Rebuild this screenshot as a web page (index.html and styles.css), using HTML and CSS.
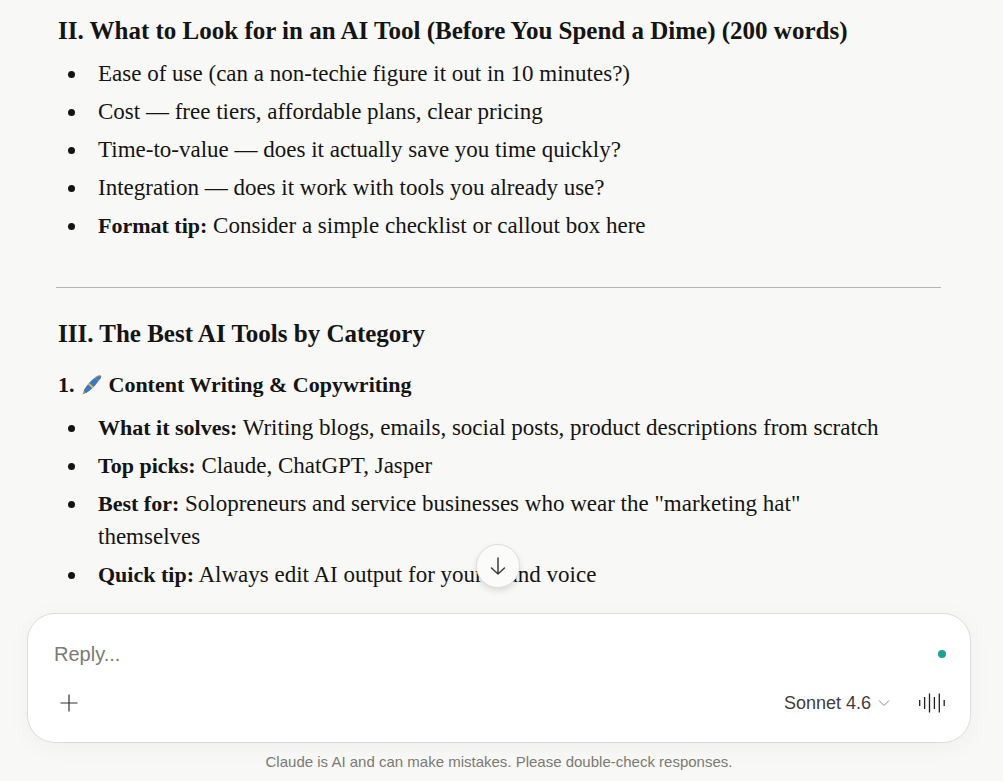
FILE: index.html
```html
<!DOCTYPE html>
<html lang="en">
<head>
  <meta charset="UTF-8" />
  <meta name="viewport" content="width=device-width, initial-scale=1" />
  <title>Claude</title>
  <link rel="stylesheet" href="styles.css">
</head>
<body>

  <main class="message">
    <h2>II. What to Look for in an AI Tool (Before You Spend a Dime) (200 words)</h2>
    <ul>
      <li>Ease of use (can a non-techie figure it out in 10 minutes?)</li>
      <li>Cost — free tiers, affordable plans, clear pricing</li>
      <li>Time-to-value — does it actually save you time quickly?</li>
      <li>Integration — does it work with tools you already use?</li>
      <li><strong>Format tip:</strong> Consider a simple checklist or callout box here</li>
    </ul>

    <hr>

    <h2>III. The Best AI Tools by Category</h2>
    <h3>
      <span>1.</span>
      <svg class="pen" width="20" height="20" viewBox="0 0 20 20" aria-hidden="true">
        <path d="M.5 19.500 2 15.200 4.600 17.800z" fill="#b08c4c" />
        <path d="M1.800 15.500C3.500 11.500 7.500 7 13 2.500L16.500 6C13 11 8.500 15.500 4.300 17.900z" fill="#3c78bd" />
        <path d="M13 2.500C15.500 .8 18 0 19 .8C19.800 1.800 18.500 4 16.500 6z" fill="#4579ae" />
        <path d="M7 7.700 11.800 12 10.300 13.300 5.600 9.100z" fill="#dfb765" />
        <path d="M13 2.500C15.500 .8 18 0 19 .8" fill="none" stroke="#d0a95c" />
      </svg>
      <span>Content Writing &amp; Copywriting</span>
    </h3>
    <ul>
      <li><strong>What it solves:</strong> Writing blogs, emails, social posts, product descriptions from scratch</li>
      <li><strong>Top picks:</strong> Claude, ChatGPT, Jasper</li>
      <li><strong>Best for:</strong> Solopreneurs and service businesses who wear the "marketing hat" themselves</li>
      <li><strong>Quick tip:</strong> Always edit AI output for your brand voice</li>
    </ul>
  </main>

  <footer class="dock">
    <button class="scroll-down" type="button" aria-label="Scroll to bottom">
      <svg width="20" height="20" viewBox="0 0 20 20" fill="none" stroke="#3d3d3a" stroke-width="1.500" stroke-linecap="round" stroke-linejoin="round">
        <path d="M10 2v16M3.500 12l6.500 6 6.500-6" />
      </svg>
    </button>

    <form class="composer">
      <div class="row">
        <input class="reply" type="text" placeholder="Reply..." aria-label="Reply" />
        <span class="dot"></span>
      </div>
      <div class="row">
        <button class="icon" type="button" aria-label="Add">
          <svg width="18" height="18" viewBox="0 0 18 18" stroke="#30302e" stroke-width="1.200">
            <path d="M9 .5v17M.5 9h17" />
          </svg>
        </button>
        <div class="tools">
          <button class="model" type="button">
            Sonnet 4.6
            <svg width="12" height="8" viewBox="0 0 12 8" fill="none" stroke="#8a8984">
              <path d="M1 1.500l5 5 5-5" />
            </svg>
          </button>
          <button class="icon" type="button" aria-label="Voice mode">
            <svg width="26" height="20" viewBox="0 0 26 20" stroke="#1f1f1e" stroke-width="1.300">
              <path d="M.7 7v6M5.600 4v12M10.500 .5v19M15.400 4v12M20.300 .5v19M25.200 7v6" />
            </svg>
          </button>
        </div>
      </div>
    </form>

    <p class="note">Claude is AI and can make mistakes. Please double-check responses.</p>
  </footer>

</body>
</html>
```

FILE: styles.css
```css
* {
  box-sizing: border-box;
}
body {
  margin: 0;
  background-color: #f8f8f6;
  color: #141413;
  font-family: "Liberation Serif", "Times New Roman", serif;
  font-size: 23px;
  line-height: 33px;
}
.message {
  padding: 14px 62px 22px 56px;
}
h2, h3 {
  margin: 0;
  padding-left: 2px;
}
h2 {
  font-size: 25px;
}
h3 {
  display: flex;
  align-items: center;
  gap: 7px;
  margin-top: 18px;
}
h3, strong {
  font-size: 22px;
}
ul {
  display: flex;
  flex-direction: column;
  gap: 5px;
  margin: 10px 0 0;
  padding: 0 40px 0 42px;
  list-style: none;
}
li::before {
  content: "";
  display: inline-block;
  width: 7px;
  height: 7px;
  margin: 0 23px 3px -30px;
  border-radius: 50%;
  background-color: #141413;
}
hr {
  margin: 45px 0 29px;
  border: none;
  border-top: 1px solid #b5b5b2;
}
.dock {
  position: relative;
  padding: 0 32px 0 27px;
  font-family: "Liberation Sans", Arial, sans-serif;
}
.scroll-down {
  position: absolute;
  left: 50%;
  top: -69px;
  display: flex;
  align-items: center;
  justify-content: center;
  width: 44px;
  height: 44px;
  margin-left: -26px;
  padding: 0;
  border: 1px solid #dededa;
  border-radius: 50%;
  background-color: #fbfbfa;
  box-shadow: 0 3px 6px rgba(0, 0, 0, 0.12);
  cursor: pointer;
}
.composer {
  display: flex;
  flex-direction: column;
  gap: 16px;
  padding: 24px 24px 22px 26px;
  border: 1px solid #dddddb;
  border-radius: 28px;
  background-color: white;
  box-shadow: 0 4px 24px rgba(0, 0, 0, 0.04);
}
.row {
  display: flex;
  align-items: center;
  justify-content: space-between;
}
.reply {
  flex: 1;
  min-width: 0;
  height: 32px;
  padding: 0;
  border: none;
  outline: none;
  background: none;
  font-family: inherit;
  font-size: 20px;
}
.reply::placeholder {
  color: #7b7a75;
}
.dot {
  width: 8px;
  height: 8px;
  border-radius: 50%;
  background-color: #1fa294;
}
.icon, .model {
  display: flex;
  align-items: center;
  height: 34px;
  padding: 0;
  border: none;
  background: none;
  cursor: pointer;
}
.row > .icon {
  padding-left: 6px;
}
.tools {
  display: flex;
  gap: 29px;
  padding-right: 1px;
}
.model {
  gap: 7px;
  color: #3d3d3a;
  font-family: inherit;
  font-size: 18px;
}
.note {
  margin: 8px 0 0;
  color: #7b7a75;
  font-size: 15px;
  line-height: 22px;
  text-align: center;
}
```
